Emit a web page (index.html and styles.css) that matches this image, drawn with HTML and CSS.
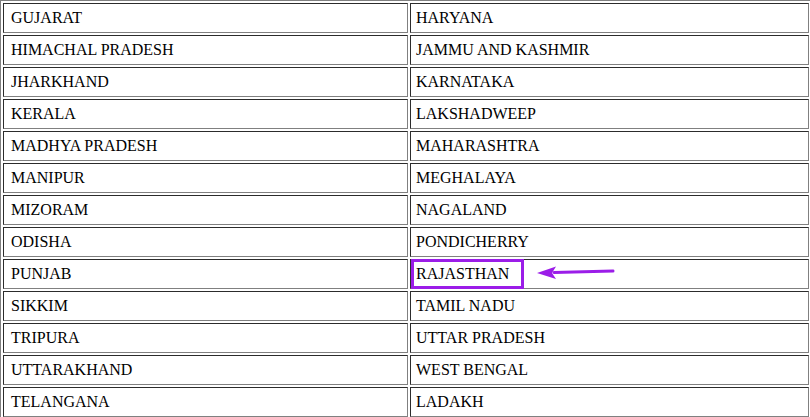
FILE: index.html
```html
<!DOCTYPE html>
<html>
<head>
<meta charset="utf-8">
<link rel="stylesheet" href="styles.css">
</head>
<body>
<table class="states">
<tr><td>GUJARAT</td><td>HARYANA</td></tr>
<tr><td>HIMACHAL PRADESH</td><td>JAMMU AND KASHMIR</td></tr>
<tr><td>JHARKHAND</td><td>KARNATAKA</td></tr>
<tr><td>KERALA</td><td>LAKSHADWEEP</td></tr>
<tr><td>MADHYA PRADESH</td><td>MAHARASHTRA</td></tr>
<tr><td>MANIPUR</td><td>MEGHALAYA</td></tr>
<tr><td>MIZORAM</td><td>NAGALAND</td></tr>
<tr><td>ODISHA</td><td>PONDICHERRY</td></tr>
<tr><td>PUNJAB</td><td class="marked">RAJASTHAN<span class="box"></span><svg class="arrow" width="80" height="16" viewBox="0 0 80 16"><path d="M18 7.5 L77 6" stroke="#9b1de8" stroke-width="3" fill="none" stroke-linecap="round"/><path d="M1 8 L20 1.5 L16 8 L20 14 Z" fill="#9b1de8"/></svg></td></tr>
<tr><td>SIKKIM</td><td>TAMIL NADU</td></tr>
<tr><td>TRIPURA</td><td>UTTAR PRADESH</td></tr>
<tr><td>UTTARAKHAND</td><td>WEST BENGAL</td></tr>
<tr><td>TELANGANA</td><td>LADAKH</td></tr>
</table>
</body>
</html>
```
FILE: styles.css
```css
html, body {
  margin: 0;
  padding: 0;
  background: #fff;
  overflow: hidden;
}
.states {
  width: 812px;
  table-layout: fixed;
  border: 1px outset grey;
  border-spacing: 2px;
  font-family: "Liberation Serif", "Times New Roman", serif;
  font-size: 16px;
  color: #000;
}
.states td {
  border: 1px inset grey;
  padding: 5px;
  line-height: 18px;
}
.states td:first-child {
  width: 391px;
  padding-left: 7px;
}
.marked {
  position: relative;
}
.box {
  position: absolute;
  left: 0;
  top: -1px;
  width: 113px;
  height: 30px;
  box-sizing: border-box;
  border: 3px solid #9b1de8;
}
.arrow {
  position: absolute;
  left: 125px;
  top: 5px;
}
```
